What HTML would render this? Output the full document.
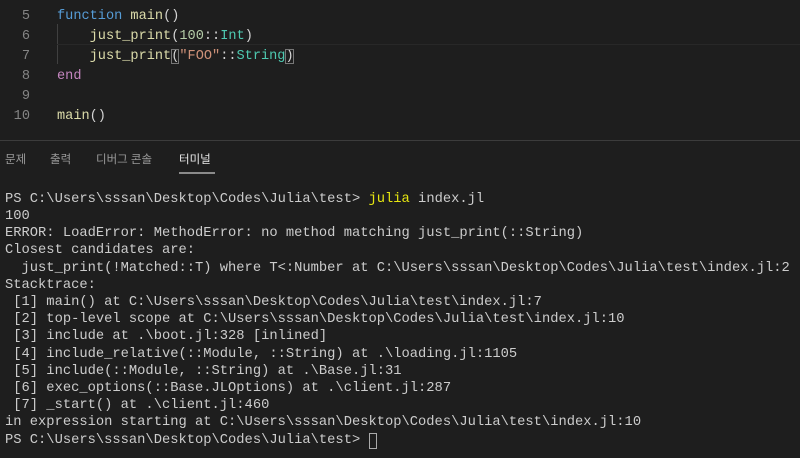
<!DOCTYPE html>
<html><head><meta charset="utf-8"><style>
html,body{margin:0;padding:0;}
body{width:800px;height:458px;background:#1e1e1e;overflow:hidden;position:relative;font-family:"Liberation Mono",monospace;}
.ed{position:absolute;left:0;font-size:13.6px;line-height:20px;white-space:pre;color:#dcdcaa;}
.ln{position:absolute;width:30px;text-align:right;left:0;color:#858585;font-size:13.6px;line-height:20px;}
.kw{color:#569cd6}.ty{color:#4ec9b0}.nu{color:#b5cea8}.st{color:#ce9178}.pu{color:#d4d4d4}.en{color:#c586c0}
.t{position:absolute;left:5px;font-size:13.77px;line-height:17px;white-space:pre;color:#cccccc;}
.tab{position:absolute;top:151px;font-family:"Liberation Sans","Noto Sans CJK KR",sans-serif;font-size:11.5px;color:#9a9a9a;}
</style></head><body>
<div class="ln" style="top:7px">5</div>
<div class="ln" style="top:27px">6</div>
<div class="ln" style="top:47px">7</div>
<div class="ln" style="top:67px">8</div>
<div class="ln" style="top:87px">9</div>
<div class="ln" style="top:107px">10</div>
<div style="position:absolute;left:57px;top:24px;width:1px;height:40px;background:#404040"></div>
<div style="position:absolute;left:57px;top:44px;width:743px;height:1px;background:#282828"></div>
<div class="ed" style="left:57px;top:7px"><span class="kw">function</span> main<span class="pu">()</span></div>
<div class="ed" style="left:57px;top:27px">    just_print<span class="pu">(</span><span class="nu">100</span><span class="pu">::</span><span class="ty">Int</span><span class="pu">)</span></div>
<div class="ed" style="left:57px;top:47px">    just_print<span class="pu" style="outline:1px solid #777;outline-offset:-1px">(</span><span class="st">"FOO"</span><span class="pu">::</span><span class="ty">String</span><span class="pu" style="outline:1px solid #777;outline-offset:-1px">)</span></div>
<div class="ed" style="left:57px;top:67px"><span class="en">end</span></div>
<div class="ed" style="left:57px;top:107px">main<span class="pu">()</span></div>
<div style="position:absolute;left:0;top:140px;width:800px;height:1px;background:#3c3c3c"></div>
<div class="tab" style="left:5px">문제</div>
<div class="tab" style="left:50px">출력</div>
<div class="tab" style="left:96px">디버그 콘솔</div>
<div class="tab" style="left:179px;color:#e7e7e7">터미널</div>
<div style="position:absolute;left:179px;top:172px;width:36px;height:2px;background:#8a8a8a"></div>
<div class="t" style="top:191px">PS C:\Users\sssan\Desktop\Codes\Julia\test&gt; <span style="color:#e5e510">julia</span> index.jl</div>
<div class="t" style="top:208px">100</div>
<div class="t" style="top:225px">ERROR: LoadError: MethodError: no method matching just_print(::String)</div>
<div class="t" style="top:242px">Closest candidates are:</div>
<div class="t" style="top:260px">  just_print(!Matched::T) where T&lt;:Number at C:\Users\sssan\Desktop\Codes\Julia\test\index.jl:2</div>
<div class="t" style="top:277px">Stacktrace:</div>
<div class="t" style="top:294px"> [1] main() at C:\Users\sssan\Desktop\Codes\Julia\test\index.jl:7</div>
<div class="t" style="top:311px"> [2] top-level scope at C:\Users\sssan\Desktop\Codes\Julia\test\index.jl:10</div>
<div class="t" style="top:328px"> [3] include at .\boot.jl:328 [inlined]</div>
<div class="t" style="top:346px"> [4] include_relative(::Module, ::String) at .\loading.jl:1105</div>
<div class="t" style="top:363px"> [5] include(::Module, ::String) at .\Base.jl:31</div>
<div class="t" style="top:380px"> [6] exec_options(::Base.JLOptions) at .\client.jl:287</div>
<div class="t" style="top:397px"> [7] _start() at .\client.jl:460</div>
<div class="t" style="top:414px">in expression starting at C:\Users\sssan\Desktop\Codes\Julia\test\index.jl:10</div>
<div class="t" style="top:432px">PS C:\Users\sssan\Desktop\Codes\Julia\test&gt; </div>
<div style="position:absolute;left:369px;top:433px;width:8px;height:16px;border:1px solid #aaa;box-sizing:border-box"></div>
</body></html>
